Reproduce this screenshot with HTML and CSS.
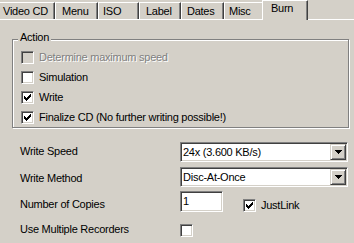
FILE: index.html
```html
<!DOCTYPE html>
<html>
<head>
<meta charset="utf-8">
<link rel="stylesheet" href="styles.css">
</head>
<body>
<div class="window">
  <div class="tabs">
    <div class="tab tab-video">Video CD</div>
    <div class="tab tab-menu">Menu</div>
    <div class="tab tab-iso">ISO</div>
    <div class="tab tab-label">Label</div>
    <div class="tab tab-dates">Dates</div>
    <div class="tab tab-misc">Misc</div>
    <div class="tab tab-burn">Burn</div>
  </div>
  <div class="panel">
    <div class="group">
      <div class="group-title">Action</div>
      <div class="checks">
        <div class="check is-disabled"><span class="cb"></span><span class="check-text">Determine maximum speed</span></div>
        <div class="check"><span class="cb"></span><span class="check-text">Simulation</span></div>
        <div class="check"><span class="cb"><svg class="tick" width="7" height="7" viewBox="0 0 7 7" shape-rendering="crispEdges"><path d="M6 0h1v1h-1z M5 1h2v1h-2z M0 2h1v1h-1z M4 2h3v1h-3z M0 3h2v1h-2z M3 3h3v1h-3z M0 4h5v1h-5z M1 5h3v1h-3z M2 6h1v1h-1z" fill="#000"/></svg></span><span class="check-text">Write</span></div>
        <div class="check"><span class="cb"><svg class="tick" width="7" height="7" viewBox="0 0 7 7" shape-rendering="crispEdges"><path d="M6 0h1v1h-1z M5 1h2v1h-2z M0 2h1v1h-1z M4 2h3v1h-3z M0 3h2v1h-2z M3 3h3v1h-3z M0 4h5v1h-5z M1 5h3v1h-3z M2 6h1v1h-1z" fill="#000"/></svg></span><span class="check-text">Finalize CD (No further writing possible!)</span></div>
      </div>
    </div>
    <div class="form">
      <div class="row row-speed">
        <span class="lbl">Write Speed</span>
        <div class="combo"><span class="combo-text">24x (3.600 KB/s)</span><span class="combo-btn"><svg width="7" height="4" viewBox="0 0 7 4" shape-rendering="crispEdges"><path d="M0 0h7v1h-7z M1 1h5v1h-5z M2 2h3v1h-3z M3 3h1v1h-1z" fill="#000"/></svg></span></div>
      </div>
      <div class="row row-method">
        <span class="lbl">Write Method</span>
        <div class="combo"><span class="combo-text">Disc-At-Once</span><span class="combo-btn"><svg width="7" height="4" viewBox="0 0 7 4" shape-rendering="crispEdges"><path d="M0 0h7v1h-7z M1 1h5v1h-5z M2 2h3v1h-3z M3 3h1v1h-1z" fill="#000"/></svg></span></div>
      </div>
      <div class="row row-copies">
        <span class="lbl">Number of Copies</span>
        <div class="edit">1</div>
        <div class="check justlink"><span class="cb"><svg class="tick" width="7" height="7" viewBox="0 0 7 7" shape-rendering="crispEdges"><path d="M6 0h1v1h-1z M5 1h2v1h-2z M0 2h1v1h-1z M4 2h3v1h-3z M0 3h2v1h-2z M3 3h3v1h-3z M0 4h5v1h-5z M1 5h3v1h-3z M2 6h1v1h-1z" fill="#000"/></svg></span><span class="check-text">JustLink</span></div>
      </div>
      <div class="row row-multi">
        <span class="lbl">Use Multiple Recorders</span>
        <span class="cb multi-cb"></span>
      </div>
    </div>
  </div>
</div>
</body>
</html>
```
FILE: styles.css
```css
html, body {
  margin: 0;
  padding: 0;
  background: #d4d0c8;
}
body {
  font-family: "Liberation Sans", Arial, sans-serif;
  font-size: 11px;
  line-height: 13px;
  letter-spacing: -0.25px;
  color: #000;
  overflow: hidden;
  width: 354px;
  height: 243px;
}
.window {
  width: 354px;
  height: 243px;
  overflow: hidden;
}

/* Tabs */
.tabs {
  display: flex;
  align-items: flex-end;
  height: 19px;
  margin-left: -4px;
  white-space: nowrap;
}
.tab {
  flex: none;
  box-sizing: border-box;
  height: 17px;
  border-top: 1px solid #fff;
  border-left: 1px solid #fff;
  border-right: 1px solid #404040;
  box-shadow: inset -1px 0 #808080;
  padding: 2px 0 0 6px;
  line-height: 13px;
  background: #d4d0c8;
}
.tab-video { width: 59px; padding-left: 6px; }
.tab-menu { width: 43px; padding-left: 6px; }
.tab-iso { width: 41px; padding-left: 4px; }
.tab-label { width: 42px; padding-left: 6px; }
.tab-dates { width: 43px; padding-left: 5px; }
.tab-misc { width: 40px; padding-left: 4px; }
.tab-burn {
  width: 46px;
  height: 20px;
  margin: 0 -2px -1px -2px;
  padding: 1px 0 0 8px;
  position: relative;
  z-index: 1;
}

/* Panel */
.panel {
  border-top: 1px solid #fff;
}

/* Group box */
.group {
  margin: 19px 5px 0 12px;
  border: 1px solid #808080;
  box-shadow: inset 1px 1px #fff, 1px 1px 0 #fff;
  padding: 0 0 3px 8px;
}
.group-title {
  width: fit-content;
  margin: -9px 0 0 -3px;
  padding: 0 2px;
  background: #d4d0c8;
  line-height: 13px;
}
.checks {
  display: flex;
  flex-direction: column;
  gap: 7px;
  margin-top: 7px;
}
.check {
  display: flex;
  align-items: center;
  gap: 5px;
  height: 13px;
  line-height: 13px;
  white-space: nowrap;
}
.cb {
  flex: none;
  box-sizing: border-box;
  width: 13px;
  height: 13px;
  border: 1px solid;
  border-color: #808080 #fff #fff #808080;
  box-shadow: inset 1px 1px #404040, inset -1px -1px #d4d0c8;
  background: #fff;
  display: flex;
  align-items: flex-start;
  justify-content: flex-start;
}
.tick {
  display: block;
  margin: 2px 0 0 2px;
}
.is-disabled .cb {
  background: #d4d0c8;
}
.is-disabled .check-text {
  color: #808080;
  text-shadow: 1px 1px 0 #fff;
}

/* Form */
.form {
  margin: 14px 0 0 20px;
}
.row {
  display: flex;
  align-items: flex-start;
}
.lbl {
  flex: none;
  width: 160px;
  white-space: nowrap;
}
.row-speed .lbl { padding-top: 3px; }
.row-method { margin-top: 5px; }
.row-method .lbl { padding-top: 5px; }
.row-copies { margin-top: 4px; }
.row-copies .lbl { padding-top: 7px; }
.row-multi { margin-top: 11px; }
.multi-cb { margin-top: 1px; }

.combo {
  box-sizing: border-box;
  width: 168px;
  height: 20px;
  border: 1px solid;
  border-color: #808080 #fff #fff #808080;
  box-shadow: inset 1px 1px #404040, inset -1px -1px #d4d0c8;
  background: #fff;
  padding: 1px 1px 1px 1px;
  display: flex;
}
.combo-text {
  flex: 1;
  line-height: 16px;
  padding-left: 1px;
  white-space: nowrap;
}
.combo-btn {
  flex: none;
  box-sizing: border-box;
  width: 16px;
  height: 16px;
  border: 1px solid;
  border-color: #d4d0c8 #404040 #404040 #d4d0c8;
  box-shadow: inset 1px 1px #fff, inset -1px -1px #808080;
  background: #d4d0c8;
  display: flex;
  align-items: center;
  justify-content: center;
  padding-left: 1px;
}
.combo-btn svg {
  display: block;
}

.edit {
  flex: none;
  box-sizing: border-box;
  width: 43px;
  height: 21px;
  border: 1px solid;
  border-color: #808080 #fff #fff #808080;
  box-shadow: inset 1px 1px #404040, inset -1px -1px #d4d0c8;
  background: #fff;
  padding: 3px 0 0 2px;
  line-height: 13px;
}
.justlink {
  margin: 8px 0 0 20px;
}
```
